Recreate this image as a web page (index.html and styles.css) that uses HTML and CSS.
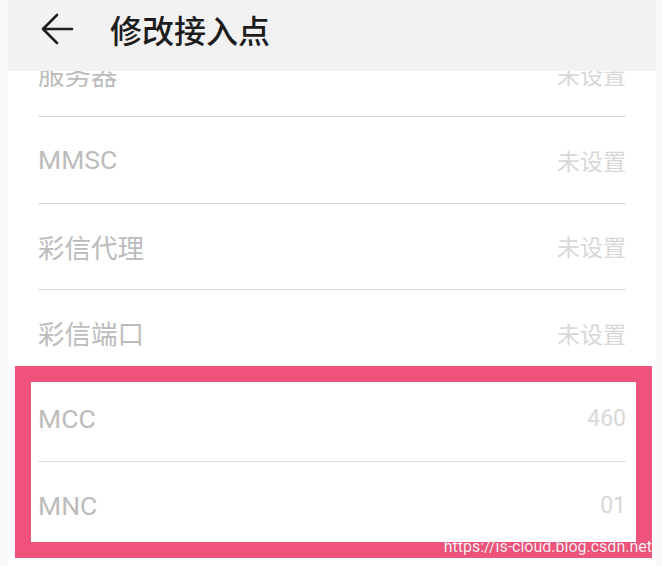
FILE: index.html
```html
<!DOCTYPE html>
<html lang="zh-CN">

<head>
    <meta charset="UTF-8">
    <meta name="viewport" content="width=device-width, initial-scale=1.0">
    <title>修改接入点</title>

    <link rel="stylesheet" href="styles.css">
</head>

<body>

    <div class="screen">
        <!-- Title bar -->
        <div class="titlebar">
            <svg class="back" width="34" height="32" viewBox="0 0 34 32">
                <path d="M3 16 H32 M17 2 L3 16 L17 30" fill="none" stroke="#1f1f1f" stroke-width="2.6" stroke-linecap="round" stroke-linejoin="round"/>
            </svg>
            <h1>修改接入点</h1>
        </div>

        <!-- APN settings list (scrolled) -->
        <ul class="list">
            <li class="row"><span class="label">服务器</span><span class="value">未设置</span></li>
            <li class="row"><span class="label">MMSC</span><span class="value">未设置</span></li>
            <li class="row"><span class="label">彩信代理</span><span class="value">未设置</span></li>
            <li class="row"><span class="label">彩信端口</span><span class="value">未设置</span></li>
            <li class="row"><span class="label">MCC</span><span class="value">460</span></li>
            <li class="row"><span class="label">MNC</span><span class="value">01</span></li>
        </ul>
    </div>

    <!-- Annotation over the screenshot -->
    <div class="highlight"></div>
    <div class="watermark">https://is-cloud.blog.csdn.net</div>

</body>

</html>
```

FILE: styles.css
```css
* {
    margin: 0;
    padding: 0;
    box-sizing: border-box;
}

html, body {
    width: 100%;
    height: 100%;
    overflow: hidden;
    background-color: #fafafa;
    font-family: Roboto, "Noto Sans CJK SC", sans-serif;
}

body {
    position: relative;
}

.screen {
    width: 648px;
    height: 566px;
    margin-left: 8px;
    background-color: #fff;
    overflow: hidden;
}

/* Title bar */
.titlebar {
    position: relative;
    z-index: 1;
    height: 71px;
    background-color: #f2f2f2;
    display: flex;
    align-items: flex-start;
    padding: 12px 0 0 32px;
    gap: 36px;
}

.back {
    display: block;
    margin-top: 1px;
}

.titlebar h1 {
    font-family: "Noto Sans CJK SC", sans-serif;
    font-size: 32px;
    font-weight: 500;
    color: #1c1c1c;
    line-height: 34px;
}

/* List */
.list {
    list-style: none;
    margin-top: -40px;
    padding: 0 30px;
}

.row {
    height: 86.3px;
    display: flex;
    justify-content: space-between;
    align-items: center;
    border-bottom: 1px solid #dadada;
}

.label {
    font-size: 26.5px;
    color: #bcbcbc;
}

.value {
    font-size: 23px;
    color: #d8d8d8;
}

/* Annotation */
.highlight {
    position: absolute;
    left: 15px;
    top: 366px;
    width: 637px;
    height: 192px;
    border: 16px solid #ef537b;
}

.watermark {
    position: absolute;
    right: 10px;
    top: 537px;
    font-family: Roboto, sans-serif;
    font-size: 16px;
    color: #fff;
    opacity: 0.9;
    text-shadow: 0 0 1px rgba(0, 0, 0, 0.25);
}
```
